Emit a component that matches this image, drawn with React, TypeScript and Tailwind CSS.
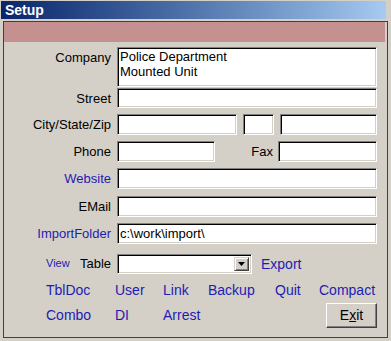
import React from "react";

const box =
  "bg-white border border-t-[#808080] border-l-[#808080] border-b-white border-r-white shadow-[inset_1px_1px_0_#000,inset_-1px_-1px_0_#d4d0c8]";

function Box({ w, h = 21, children }: { w: number; h?: number; children?: React.ReactNode }) {
  return (
    <div className={box + " flex items-center pl-[2px] text-[13px] text-black"} style={{ width: w, height: h }}>
      {children}
    </div>
  );
}

function Row({ label, blue, mt, h = 21, children }: { label: string; blue?: boolean; mt: number; h?: number; children?: React.ReactNode }) {
  return (
    <div className="flex items-center" style={{ marginTop: mt, height: h }}>
      <div className={"w-[107px] text-right text-[13px] leading-[15px] " + (blue ? "text-[#1c1cb4]" : "text-black")}>{label}</div>
      <div className="ml-[6px] flex items-center">{children}</div>
    </div>
  );
}

export default function App() {
  return (
    <div
      className="relative w-[391px] h-[341px] bg-[#d4d0c8] overflow-hidden flex flex-col"
      style={{ fontFamily: '"Liberation Sans", Arial, sans-serif' }}
    >
      <div className="mx-[1px] mt-[1px] h-[18px] bg-gradient-to-r from-[#0a246a] to-[#a6caf0] flex items-center pl-[4px] w-[385px]">
        <span className="text-white font-bold text-[14px] leading-none">Setup</span>
      </div>
      <div className="ml-[3px] mt-[2px] w-[385px] h-[317px] border-l border-t border-[#404040] border-r border-r-[#404040] border-b border-b-[#404040] flex flex-col">
        <div className="h-[20px] w-[381px] bg-[#c49090]" />
        {/* Company */}
        <div className="flex items-start mt-[5px]">
          <div className="w-[107px] text-right text-[13px] leading-[15px] pt-[3px] text-black">Company</div>
          <div className={box + " ml-[6px] w-[260px] h-[40px] pl-[2px] pt-[1px] text-[13px] leading-[15px] text-black"}>
            <div>Police Department</div>
            <div>Mounted Unit</div>
          </div>
        </div>
        <Row label="Street" mt={1} h={20}>
          <Box w={260} h={20} />
        </Row>
        <Row label="City/State/Zip" mt={6}>
          <Box w={120} />
          <div className="ml-[6px]">
            <Box w={31} />
          </div>
          <div className="ml-[6px]">
            <Box w={97} />
          </div>
        </Row>
        <Row label="Phone" mt={6}>
          <Box w={98} />
          <div className="w-[58px] text-right text-[13px] text-black">Fax</div>
          <div className="ml-[5px]">
            <Box w={99} />
          </div>
        </Row>
        <Row label="Website" blue mt={6}>
          <Box w={260} />
        </Row>
        <Row label="EMail" mt={7}>
          <Box w={260} />
        </Row>
        <Row label="ImportFolder" blue mt={6}>
          <Box w={260}>c:\work\import\</Box>
        </Row>
        {/* Table row */}
        <div className="flex items-center mt-[10px] h-[20px]">
          <div className="w-[107px] flex items-center">
            <span className="ml-[42px] text-[11px] leading-[13px] text-[#1c1cb4] -mt-[2px]">View</span>
            <span className="ml-auto text-[13px] text-black">Table</span>
          </div>
          <div className={box + " ml-[6px] w-[135px] h-[20px] flex justify-end items-stretch p-[2px]"}>
            <div className="w-[15px] bg-[#d4d0c8] border border-t-[#d4d0c8] border-l-[#d4d0c8] border-b-[#404040] border-r-[#404040] shadow-[inset_1px_1px_0_#fff,inset_-1px_-1px_0_#808080] flex items-center justify-center">
              <svg width="7" height="4" viewBox="0 0 7 4">
                <polygon points="0,0 7,0 3.5,4" fill="#000" />
              </svg>
            </div>
          </div>
          <span className="ml-[9px] text-[14px] text-[#1c1cb4]">Export</span>
        </div>
        {/* Links row 1 */}
        <div className="flex items-center mt-[8px] h-[16px] pl-[42px] text-[14px] text-[#1c1cb4]">
          <span className="w-[69px]">TblDoc</span>
          <span className="w-[48px]">User</span>
          <span className="w-[45px]">Link</span>
          <span className="w-[67px]">Backup</span>
          <span className="w-[44px]">Quit</span>
          <span>Compact</span>
        </div>
        {/* Links row 2 */}
        <div className="flex items-center mt-[5px] h-[25px] pl-[42px] text-[14px] text-[#1c1cb4]">
          <span className="w-[69px]">Combo</span>
          <span className="w-[48px]">DI</span>
          <span>Arrest</span>
          <div className="ml-auto mr-[10px] w-[51px] h-[25px] bg-[#d4d0c8] border border-t-white border-l-white border-b-[#404040] border-r-[#404040] shadow-[inset_-1px_-1px_0_#808080] flex items-center justify-center text-black text-[14px]">
            <span>
              E<span className="underline">x</span>it
            </span>
          </div>
        </div>
      </div>
    </div>
  );
}
